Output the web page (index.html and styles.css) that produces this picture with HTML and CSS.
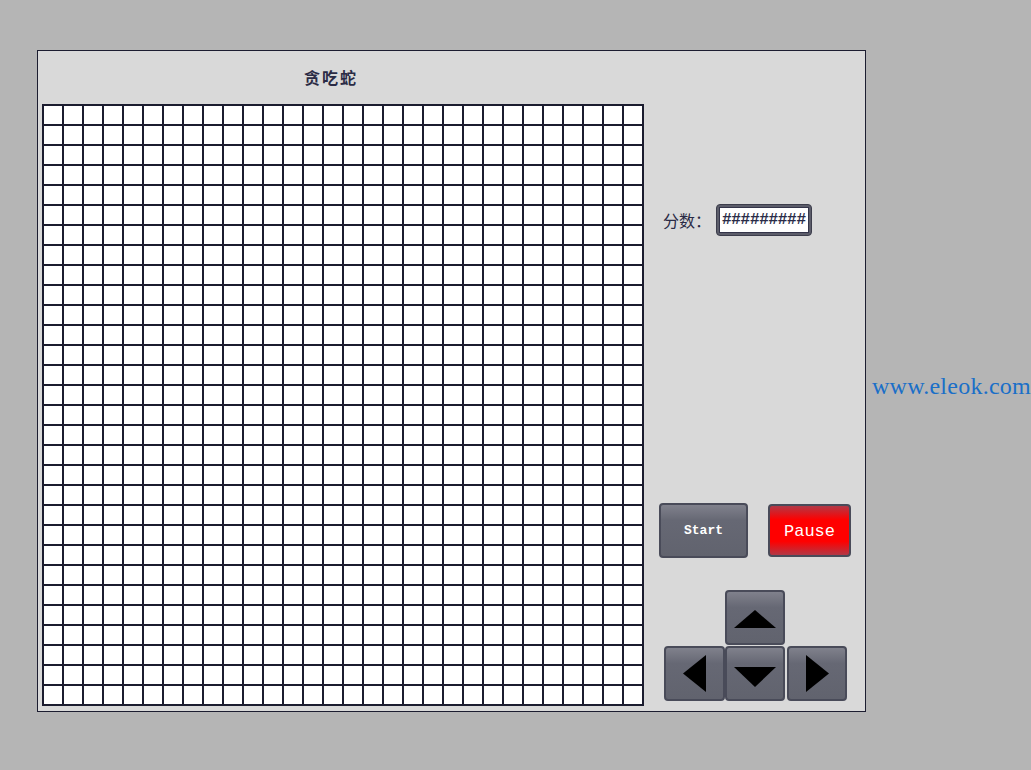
FILE: index.html
```html
<!DOCTYPE html>
<html lang="zh">
<head>
    <meta charset="UTF-8">
    <meta name="viewport" content="width=device-width, initial-scale=1.0">
    <title>贪吃蛇</title>
    <link rel="stylesheet" href="styles.css">
</head>
<body>
    <div class="screen">
        <div class="game">
            <div class="title">贪吃蛇</div>
            <div class="board"></div>
        </div>
        <div class="side">
            <div class="score">
                <span class="score-label">分数：</span>
                <div class="score-box"><div class="score-value">#########</div></div>
            </div>
            <div class="actions">
                <button class="btn start">Start</button>
                <button class="btn pause">Pause</button>
            </div>
            <div class="pad">
                <div class="pad-row">
                    <button class="btn key up"><svg width="42" height="18" viewBox="0 0 42 18"><polygon points="21,0 42,18 0,18"/></svg></button>
                </div>
                <div class="pad-row">
                    <button class="btn key left"><svg width="23" height="37" viewBox="0 0 23 37"><polygon points="0,18.5 23,0 23,37"/></svg></button>
                    <button class="btn key down"><svg width="42" height="20" viewBox="0 0 42 20"><polygon points="0,0 42,0 21,20"/></svg></button>
                    <button class="btn key right"><svg width="23" height="37" viewBox="0 0 23 37"><polygon points="0,0 23,18.5 0,37"/></svg></button>
                </div>
            </div>
        </div>
    </div>
    <div class="site">www.eleok.com</div>
</body>
</html>
```
FILE: styles.css
```css
body {
    margin: 0;
    padding: 50px 0 0 37px;
    background-color: #b5b5b5;
    display: flex;
    align-items: flex-start;
    height: 770px;
    box-sizing: border-box;
    font-family: "Noto Sans CJK SC", sans-serif;
}
.screen {
    width: 830px;
    height: 662px;
    box-sizing: border-box;
    border: 1px solid #1c1d30;
    background-color: #d9d9d9;
    display: flex;
}
.game {
    padding-left: 4px;
}
.title {
    height: 53px;
    line-height: 53px;
    padding-left: 262px;
    font-size: 16px;
    font-weight: bold;
    letter-spacing: 2px;
    color: #2a2b45;
}
.board {
    width: 602px;
    height: 602px;
    background-color: #fff;
    background-image:
        linear-gradient(to right, #1b1c2f 2px, transparent 2px),
        linear-gradient(to bottom, #1b1c2f 2px, transparent 2px);
    background-size: 20px 20px;
}
.side {
    flex: 1;
    padding-left: 15px;
    display: flex;
    flex-direction: column;
    align-items: flex-start;
}
.score {
    margin-top: 153px;
    display: flex;
    align-items: center;
}
.score-label {
    margin-left: 4px;
    width: 53px;
    font-size: 16px;
    color: #2a2b45;
}
.score-box {
    width: 96px;
    height: 32px;
    box-sizing: border-box;
    border: 1px solid #3d3e4c;
    border-radius: 4px;
    padding: 2px;
    background-color: #5c5d6a;
}
.score-value {
    height: 100%;
    box-sizing: border-box;
    border: 1px solid #34354a;
    background-color: #fff;
    white-space: nowrap;
    padding-left: 2px;
    font-family: "Liberation Mono", monospace;
    font-weight: bold;
    font-size: 16px;
    line-height: 25px;
    letter-spacing: -0.3px;
    color: #2a2c48;
}
.btn {
    display: flex;
    align-items: center;
    justify-content: center;
    padding: 0;
    box-sizing: border-box;
    border: 2px solid #494b59;
    border-radius: 4px;
    background: linear-gradient(#80818c, #666874 30%, #61636e);
    color: #fff;
    cursor: pointer;
}
.actions {
    margin-top: 267px;
    display: flex;
    align-items: flex-start;
}
.start {
    width: 89px;
    height: 55px;
    font-family: "Liberation Mono", monospace;
    font-weight: bold;
    font-size: 13px;
}
.pause {
    width: 83px;
    height: 53px;
    margin-left: 20px;
    margin-top: 1px;
    background: linear-gradient(#b23846, #ff0000 28%, #ff0000 72%, #b23846);
    font-family: "Liberation Mono", monospace;
    font-size: 17px;
    padding-top: 2px;
}
.pad {
    margin-top: 32px;
    margin-left: 5px;
}
.pad-row {
    display: flex;
}
.pad-row + .pad-row {
    margin-top: 1px;
}
.key {
    width: 60px;
    height: 55px;
}
.key svg {
    fill: #000;
}
.up {
    margin-left: 61px;
}
.up svg {
    margin-top: 2px;
}
.left {
    width: 61px;
}
.down svg {
    margin-top: 6px;
}
.right {
    margin-left: 2px;
}
.site {
    margin-left: 6px;
    margin-top: 322px;
    font-family: "Liberation Serif", serif;
    font-size: 24px;
    line-height: 28px;
    letter-spacing: 0.25px;
    color: #1a6fc8;
    white-space: nowrap;
}
```
